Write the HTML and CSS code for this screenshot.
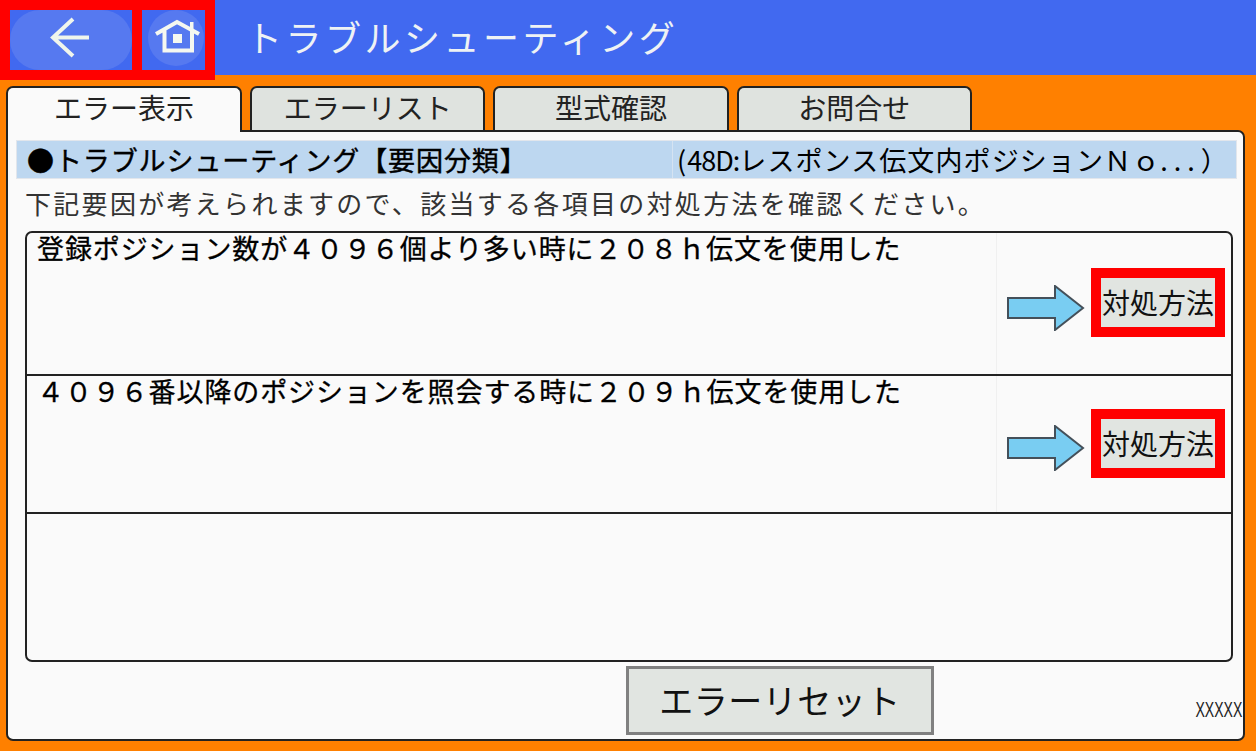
FILE: index.html
```html
<!DOCTYPE html>
<html lang="ja">
<head>
  <meta charset="UTF-8" />
  <title>トラブルシューティング</title>
  <link rel="stylesheet" href="styles.css">
</head>
<body>
  <div class="header">
    <div class="nav-box">
      <div class="back-btn">
        <svg width="122" height="60" viewBox="0 0 122 60"><path d="M63 9 L43 27.5 L63 46 M43 27.5 H79" fill="none" stroke="#f0f5ec" stroke-width="4"/></svg>
      </div>
      <div class="home-btn">
        <svg width="63" height="60" viewBox="0 0 63 60">
          <circle cx="34" cy="28" r="28" fill="#5679f0"/>
          <path d="M14 24 L35 12 L57 24 M22.5 20 V40.5 H50 V20" fill="none" stroke="#f5f8f0" stroke-width="4"/>
          <rect x="48" y="12" width="3.5" height="7" fill="#f5f8f0"/>
          <rect x="31" y="24" width="9" height="9" fill="#f5f8f0"/>
        </svg>
      </div>
    </div>
    <div class="header-title">トラブルシューティング</div>
  </div>

  <div class="tabs">
    <div class="tab active">エラー表示</div>
    <div class="tab">エラーリスト</div>
    <div class="tab">型式確認</div>
    <div class="tab">お問合せ</div>
  </div>

  <div class="panel">
    <div class="title-bar">
      <div class="title-main">●トラブルシューティング【要因分類】</div>
      <div class="title-sub">(<span class="narrow">48D:</span>レスポンス伝文内ポジションＮｏ<span class="dots">...</span>）</div>
    </div>
    <p class="lead">下記要因が考えられますので、該当する各項目の対処方法を確認ください。</p>

    <div class="cause-table">
      <div class="cause-row first">
        <div class="cause-text">登録ポジション数が４０９６個より多い時に２０８ｈ伝文を使用した</div>
        <div class="cause-action">
          <svg class="arrow" width="78" height="46" viewBox="0 0 78 46"><path d="M1 13 H48 V1 L76 23 L48 45 V33 H1 Z" fill="#79cdf2" stroke="#44505a" stroke-width="2"/></svg>
          <div class="fix-btn">対処方法</div>
        </div>
      </div>
      <div class="cause-row second">
        <div class="cause-text">４０９６番以降のポジションを照会する時に２０９ｈ伝文を使用した</div>
        <div class="cause-action">
          <svg class="arrow" width="78" height="46" viewBox="0 0 78 46"><path d="M1 13 H48 V1 L76 23 L48 45 V33 H1 Z" fill="#79cdf2" stroke="#44505a" stroke-width="2"/></svg>
          <div class="fix-btn">対処方法</div>
        </div>
      </div>
      <div class="cause-row empty"></div>
    </div>

    <div class="footer">
      <div class="reset-btn">エラーリセット</div>
      <div class="code">XXXXX</div>
    </div>
  </div>
</body>
</html>
```

FILE: styles.css
```css
html, body { height: 100%; }
body {
  margin: 0; background: #ff8000; overflow: hidden;
  font-family: "Noto Sans CJK JP", "Noto Sans", sans-serif; color: #111;
}

.header {
  display: flex; align-items: flex-start; height: 75px;
  background: #4169f0;
}
.nav-box {
  display: flex; gap: 10px; padding: 10px; box-sizing: border-box;
  width: 215px; height: 80px; background: #ff0000;
}
.back-btn { position: relative; width: 122px; height: 60px; background: #4169f0; }
.back-btn::before {
  content: ""; position: absolute; inset: 0; border-radius: 30px; background: #5679f0;
}
.back-btn svg { position: relative; display: block; }
.home-btn { width: 63px; height: 60px; background: #4169f0; overflow: hidden; }
.home-btn svg { display: block; }
.header-title {
  margin-left: 31px; font-size: 36px; line-height: 72px;
  letter-spacing: 3.5px; color: #eef2f4; white-space: nowrap;
}

.tabs { display: flex; gap: 8px; padding: 11px 0 0 6px; }
.tab {
  box-sizing: border-box; width: 235.3px; height: 44px; margin-bottom: -2px;
  border: 2px solid #222; border-bottom: 0; border-radius: 7px 7px 0 0;
  background: #dfe3df; text-align: center;
  font-size: 28px; line-height: 39px; color: #222;
}
.tab.active { position: relative; z-index: 1; width: 236px; height: 46px; background: #fafafa; }

.panel {
  box-sizing: border-box; height: 611px; margin: 0 11px 0 6px; padding: 9px 7px 0 9px;
  border: 2px solid #222; border-radius: 0 7px 7px 7px; background: #fafafa;
}

.title-bar {
  display: flex; height: 37px; background: #bdd7f0; box-shadow: 0 0 0 1px #e2e6ec;
  font-size: 27px; line-height: 37px; color: #000; white-space: nowrap;
}
.title-main {
  flex: none; width: 655px; padding-left: 10px; box-sizing: border-box;
  letter-spacing: 0.9px; -webkit-text-stroke: 0.4px #000;
}
.title-sub {
  flex: 1; min-width: 0; padding-left: 4px; border-left: 1px solid #d5e3f2;
  letter-spacing: 1.1px;
}
.narrow { letter-spacing: -1px; }
.dots { letter-spacing: 6px; }

.lead {
  margin: 0; padding: 10px 0 0 8px; font-size: 26px; line-height: 30px;
  letter-spacing: 2.3px; color: #333; white-space: nowrap;
}

.cause-table {
  box-sizing: border-box; height: 431px; margin: 13px 3px 0 8px;
  border: 2px solid #222; border-radius: 7px;
}
.cause-row { display: flex; border-bottom: 2px solid #222; box-sizing: border-box; }
.cause-row.first { height: 143px; }
.cause-row.second { height: 138px; }
.cause-row.empty { border-bottom: 0; }
.cause-text {
  width: 969px; height: 100%; padding: 0 0 0 10px; box-sizing: border-box;
  font-size: 27px; line-height: 29px; letter-spacing: 0.9px; color: #000; white-space: nowrap;
  -webkit-text-stroke: 0.3px #000;
}
.cause-action {
  flex: 1; display: flex; align-items: center; gap: 6px; padding: 0 0 2px 10px;
  border-left: 1px solid #f0f0f0; box-sizing: border-box;
}
.arrow { margin-top: 10px; }
.fix-btn {
  box-sizing: border-box; width: 134px; height: 69px;
  border: 10px solid #ff0000; background: #e1e5e1;
  text-align: center; font-size: 28px; line-height: 49px; color: #111;
  white-space: nowrap;
}

.footer { display: flex; justify-content: space-between; height: 78px; }
.reset-btn {
  box-sizing: border-box; width: 308px; height: 69px; margin: 4px 0 0 609px;
  border: 3px solid #808080; background: #e1e5e1;
  text-align: center; font-size: 34px; line-height: 61px; letter-spacing: 0.5px; color: #111;
}
.code {
  margin: 36px -6px 0 0; font-family: "Liberation Sans", sans-serif;
  font-size: 22px; line-height: 24px; color: #222;
  transform: scaleX(0.64); transform-origin: right center;
}
```
